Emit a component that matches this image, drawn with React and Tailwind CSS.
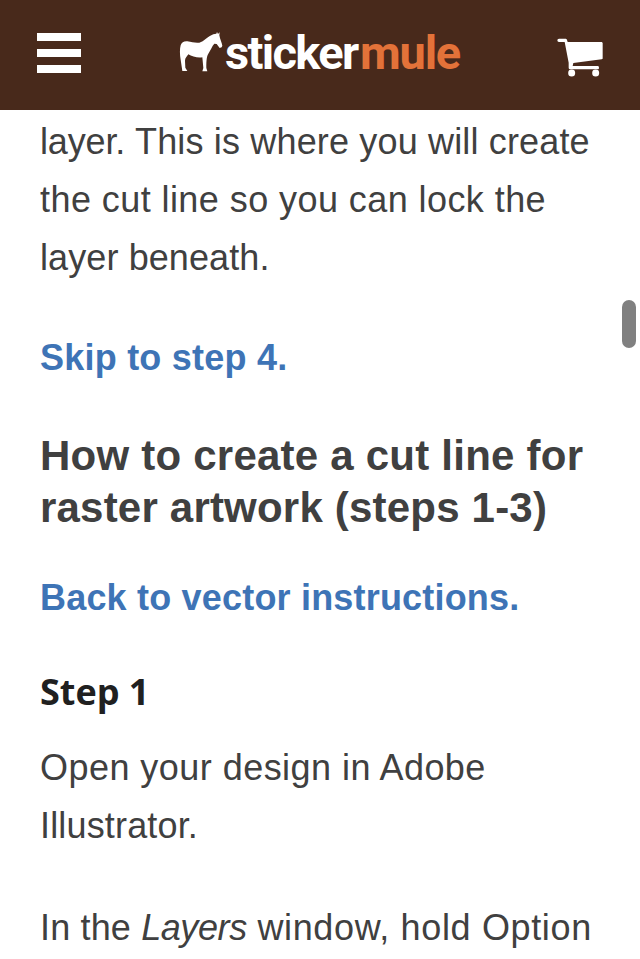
import React from 'react';

const Line = ({ children, className }) => (
  <span className={`block w-max whitespace-nowrap ${className}`}>{children}</span>
);

function Logo() {
  return (
    <div className="flex h-[50px] w-[284px] items-start">
      <svg className="block shrink-0" width="50" height="50" viewBox="0 0 150 150" aria-hidden="true">
        <path
          fill="#fff"
          d="M14 95 C11 80 11 62 14 52 C17 43 24 39 34 40 C48 42 58 46 70 44 C84 41 95 25 112 19 L121 17 L123 12 L126 18 L131 13 L130 22 C132 34 138 46 139 53 L137 58 L131 60 L122 48 L115 47 C108 54 104 67 97 77 C91 86 91 105 91 120 L94 130 L79 130 L82 120 L79 88 C65 90 47 86 37 79 C33 85 27 90 27 98 L28 119 L34 129 L19 129 Z"
        />
      </svg>
      <span className="-ml-px flex font-['Roboto',sans-serif] text-[47px] leading-[50px] font-bold whitespace-nowrap">
        <span className="w-[135px] tracking-[-1.65px] text-white">sticker</span>
        <span className="tracking-[-1.2px] text-[#e37239]">mule</span>
      </span>
    </div>
  );
}

function Cart() {
  return (
    <svg className="block" width="51" height="45" viewBox="552 32 51 45" fill="#fff">
      <g transform="translate(552 32) scale(.3333)">
        <path d="M21 20 H41 Q44 20 45 24 L47 30 H150 L152 33 V80 L149 82 L64 93 L62 102 H138 Q141 102 141 107 Q141 112 138 112 H54 Q50 112 50 107 V92 L38 30 H21 A5 5 0 0 1 21 20 Z" />
        <circle cx="59" cy="123" r="10.500" />
        <circle cx="131" cy="123" r="10.500" />
      </g>
    </svg>
  );
}

export default function App() {
  return (
    <div className="relative h-[959px] w-[640px] overflow-hidden bg-white font-['Liberation_Sans',Arial,sans-serif] text-[#404040]">
      <header className="flex h-[110px] items-start bg-[#48291b] px-[37px]">
        <button className="mt-[33px] flex flex-col gap-2" aria-label="Menu">
          <span className="h-2 w-11 bg-white" />
          <span className="h-2 w-11 bg-white" />
          <span className="h-2 w-11 bg-white" />
        </button>
        <div className="mt-7 ml-[95px]"><Logo /></div>
        <div className="mt-8 ml-auto"><Cart /></div>
      </header>
      <main className="px-10 pt-[3px] text-[36px] leading-[58px]">
        <p>
          <Line className="tracking-[0.16px]"><span className="tracking-[-0.15px]">layer. </span>This is where you will create</Line>
          <Line className="tracking-[0.43px]">the cut line so you can lock the</Line>
          <Line className="tracking-[0.1px]">layer beneath.</Line>
        </p>
        <p className="mt-[42px] font-bold text-[#3e74b6]">
          <Line className="tracking-[0.22px]">Skip to step 4.</Line>
        </p>
        <h2 className="mt-[43px] text-[42px] leading-[52px] font-bold">
          <Line className="tracking-[0.23px]">How to create a cut line for</Line>
          <Line className="tracking-[0.2px]">raster artwork (steps 1-3)</Line>
        </h2>
        <p className="mt-[35px] font-bold text-[#3e74b6]">
          <Line className="tracking-[0.19px]">Back to vector instructions.</Line>
        </p>
        <h3 className="mt-[36px] font-['Open_Sans',sans-serif] font-bold text-[#202020]">
          <Line className="tracking-[0px]">Step 1</Line>
        </h3>
        <p className="mt-[18px]">
          <Line className="tracking-[0.46px]">Open your design in Adobe</Line>
          <Line className="tracking-[0.16px]">Illustrator.</Line>
        </p>
        <p className="mt-[44px]">
          <Line className="tracking-[0.64px]"><span className="tracking-[0.15px]">In the </span><em className="tracking-[-0.4px]">Layers</em> window, hold Option</Line>
        </p>
      </main>
      <div className="absolute top-[300px] left-[622px] h-12 w-[14px] rounded-full bg-[#808080]" />
    </div>
  );
}
